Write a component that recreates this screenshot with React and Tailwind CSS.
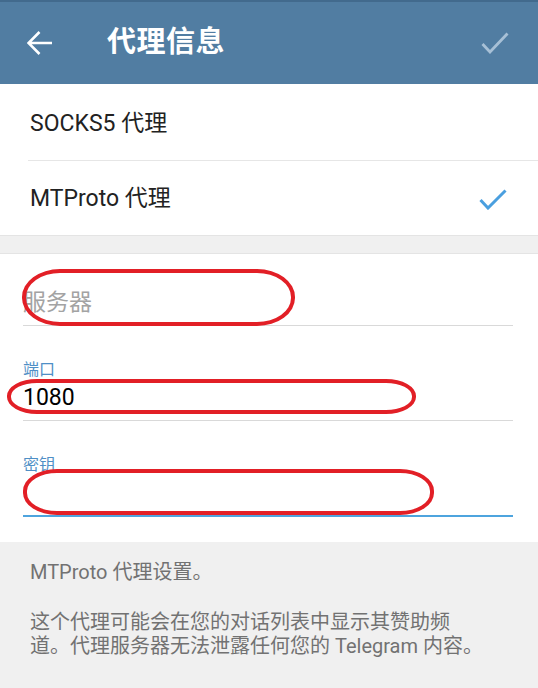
import React from "react";

const font = { fontFamily: 'Roboto, "Noto Sans CJK SC", sans-serif' };

const Field = ({ label, value, placeholder, active }) => (
  <div className="pt-[35px]">
    <div className="h-[18px] text-[16px] leading-[18px] text-[#4f8fc6]">{label}</div>
    <div className="mt-[5px] h-[28px] text-[23px] leading-[28px]">
      {value ? <span className="text-black">{value}</span> : <span className="text-[#a3a3a3]">{placeholder}</span>}
    </div>
    <div className={active ? "mt-[8px] h-[2px] bg-[#4ea4de]" : "mt-[8px] h-px bg-[#d9d9d9]"}></div>
  </div>
);

export default function App() {
  return (
    <div className="relative w-[538px] h-[688px] overflow-hidden bg-[#f0f0f0]" style={font}>
      {/* header */}
      <div className="h-[84px] bg-[#517da2] border-t-2 border-[#426a8d] flex items-center shadow-[0_1px_2px_rgba(0,0,0,0.15)]">
        <svg width="26" height="26" viewBox="0 0 26 26" className="ml-[27px]">
          <path d="M25 13H2.5M12.5 2L1.5 13l11 11" fill="none" stroke="#fff" strokeWidth="2.6" />
        </svg>
        <h1 className="ml-[54px] text-[29px] font-bold text-white tracking-[0.5px]">代理信息</h1>
        <svg width="28" height="22" viewBox="0 0 28 22" className="ml-auto mr-[29px]">
          <path d="M1.5 12l7.5 8L26.5 1.5" fill="none" stroke="#a7c0d6" strokeWidth="2.8" />
        </svg>
      </div>

      {/* proxy type */}
      <div className="bg-white">
        <div className="h-[76px] flex items-center pl-[30px] pt-[5px] text-[23px] text-[#222]">SOCKS5 代理</div>
        <div className="ml-[28px] h-px bg-[#e6e6e6]"></div>
        <div className="h-[74px] flex items-center pl-[30px] pr-[31px] pt-[2px] text-[23px] text-[#222]">
          <span>MTProto 代理</span>
          <svg width="28" height="21" viewBox="0 0 28 21" className="ml-auto">
            <path d="M1.5 11l7.5 8L26.5 1.5" fill="none" stroke="#4a9fdf" strokeWidth="3" />
          </svg>
        </div>
      </div>

      <div className="h-[18px] border-t border-[#e4e4e4]"></div>

      {/* fields */}
      <div className="bg-white pl-[23px] pr-[25px] pb-[25px] border-t border-[#e4e4e4]">
        <div className="-mt-[23px]">
          <Field label="" placeholder="服务器" />
        </div>
        <Field label="端口" value="1080" />
        <Field label="密钥" active />
      </div>

      {/* info */}
      <div className="pl-[30px] pr-[20px] pt-[18px] text-[20px] leading-[24px] text-[#727272]">
        <p>MTProto 代理设置。</p>
        <p className="mt-[26px]">
          这个代理可能会在您的对话列表中显示其赞助频
          <br />
          道。代理服务器无法泄露任何您的 Telegram 内容。
        </p>
      </div>

      {/* red annotations */}
      <div className="absolute left-[22px] top-[269px] w-[273px] h-[57px] border-[4px] border-[#e21f26] rounded-[38px/28px]"></div>
      <div className="absolute left-[7px] top-[379px] w-[409px] h-[35px] border-[4px] border-[#e21f26] rounded-[30px/17px]"></div>
      <div className="absolute left-[23px] top-[469px] w-[411px] h-[46px] border-[4px] border-[#e21f26] rounded-[34px/22px]"></div>
    </div>
  );
}
